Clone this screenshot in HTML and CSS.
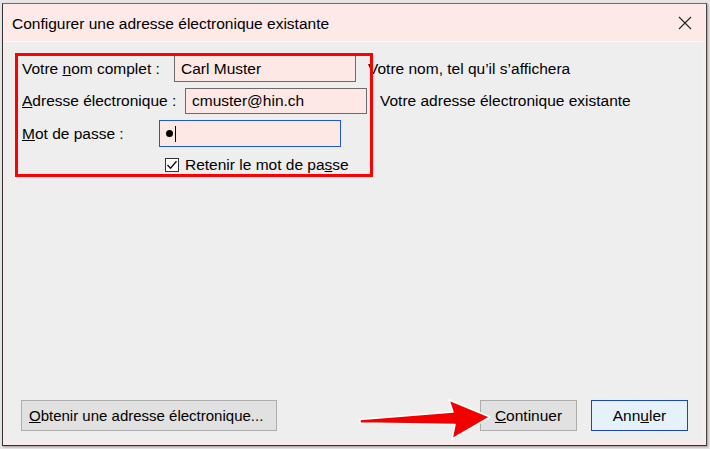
FILE: index.html
```html
<!DOCTYPE html>
<html lang="fr">
<head>
<meta charset="utf-8">
<title>Configurer une adresse électronique existante</title>
<link rel="stylesheet" href="styles.css">
</head>
<body>
<div class="dialog">
  <div class="titlebar">
    <span class="title">Configurer une adresse électronique existante</span>
    <svg class="close" width="14" height="14" viewBox="0 0 14 14"><path d="M1 1L13 13M13 1L1 13" stroke="#222" stroke-width="1.1" fill="none"/></svg>
  </div>
  <div class="content">
    <div class="form">
      <div class="row row-name">
        <label class="lbl lbl-name">Votre <u>n</u>om complet :</label>
        <div class="field">Carl Muster</div>
        <span class="hint hint-name">Votre nom, tel qu’il s’affichera</span>
      </div>
      <div class="row row-mail">
        <label class="lbl lbl-mail"><u>A</u>dresse électronique :</label>
        <div class="field field-mail">cmuster@hin.ch</div>
        <span class="hint hint-mail">Votre adresse électronique existante</span>
      </div>
      <div class="row row-pass">
        <label class="lbl lbl-pass"><u>M</u>ot de passe :</label>
        <div class="field field-pass"><span class="dot"></span><span class="caret"></span></div>
      </div>
      <div class="row row-check">
        <span class="checkbox"><svg width="12" height="12" viewBox="0 0 12 12"><path d="M1.5 6L4.5 9.2L10.5 2.2" stroke="#111" stroke-width="1.4" fill="none"/></svg></span>
        <span class="check-label">Retenir le mot de pa<u>s</u>se</span>
      </div>
    </div>
    <div class="spacer"></div>
    <div class="buttons">
      <button class="btn btn-get"><u>O</u>btenir une adresse électronique...</button>
      <div class="spacer-h"></div>
      <button class="btn btn-continue"><u>C</u>ontinuer</button>
      <button class="btn btn-cancel">Ann<u>u</u>ler</button>
    </div>
  </div>
</div>
<div class="highlight"></div>
<svg class="arrow" width="150" height="50" viewBox="355 395 150 50">
  <polygon points="360,419.5 453,412 449,400 490,417 452,439 455,424.5 360,423" fill="#f20000" stroke="#fff" stroke-width="1.5" stroke-linejoin="round"/>
</svg>
</body>
</html>
```
FILE: styles.css
```css
* { box-sizing: border-box; }
html, body { margin: 0; padding: 0; }
body {
  width: 710px;
  height: 449px;
  overflow: hidden;
  background: #e6e6e6;
  font-family: "Liberation Sans", Arial, sans-serif;
  font-size: 15.5px;
  color: #000;
  position: relative;
}
.dialog {
  margin: 3px 0 0 2px;
  width: 705px;
  height: 443px;
  border: 1px solid #6e6e6e;
  border-left-color: #333;
  border-bottom-color: #333;
  border-right-color: #444;
  background: #fcebe9;
  padding: 0 3px 4px 2px;
  display: flex;
  flex-direction: column;
  box-shadow: 1px 1px 2px rgba(0,0,0,0.35);
}
.titlebar {
  height: 37px;
  flex: none;
  display: flex;
  align-items: center;
  padding-left: 7px;
  padding-right: 11px;
  background: #fde9e7;
}
.title { flex: 1; font-size: 15.5px; padding-top: 2px; }
.close { flex: none; margin-top: 1px; }
.content {
  flex: 1;
  background: #eeeeee;
  border-top: 1px solid #fbfbfb;
  display: flex;
  flex-direction: column;
  padding: 13px 15px 10px 17px;
}
.form { display: flex; flex-direction: column; }
.row { display: flex; align-items: center; white-space: nowrap; }
.row-mail { margin-top: 6px; }
.row-pass { margin-top: 6px; }
.row-check { margin-top: 9px; }
.lbl { flex: none; }
.lbl-name { width: 152px; }
.lbl-mail { width: 163px; }
.lbl-pass { width: 137px; }
.field {
  flex: none;
  width: 182px;
  height: 27px;
  border: 1px solid #6b6b6b;
  background: #fde8e6;
  padding-left: 6px;
  display: flex;
  align-items: center;
  font-size: 15.5px;
}
.field-mail { height: 26px; }
.field-pass {
  border-color: #1e5ad4;
  padding-left: 5px;
}
.dot { width: 7px; height: 7px; border-radius: 50%; background: #000; margin-left: 1px; }
.caret { width: 1px; height: 16px; background: #000; margin-left: 2px; }
.hint { margin-left: 12px; }
.hint-mail { margin-left: 13px; }
.checkbox {
  flex: none;
  margin-left: 143px;
  width: 14px;
  height: 14px;
  border: 1px solid #333;
  background: #fff;
  display: flex;
  align-items: center;
  justify-content: center;
}
.check-label { margin-left: 6px; }
.spacer { flex: 1; }
.buttons { display: flex; align-items: center; }
.spacer-h { flex: 1; }
.btn {
  flex: none;
  font-family: inherit;
  font-size: 15.5px;
  color: #000;
  height: 31px;
  background: #e1e1e1;
  border: 1px solid #adadad;
  padding: 0 6px;
  margin: 0;
  white-space: nowrap;
}
.btn-get { margin-left: -1px; width: 256px; text-align: left; font-size: 15px; padding-left: 7px; }
.btn-continue { width: 97px; }
.btn-cancel {
  width: 97px;
  margin-left: 14px;
  background: #e5f1fb;
  border: 1px solid #1a46b8;
}
.highlight {
  position: absolute;
  left: 15px;
  top: 53px;
  width: 358px;
  height: 124px;
  border: 3px solid #f00;
  pointer-events: none;
}
.arrow {
  position: absolute;
  left: 355px;
  top: 395px;
}
```
